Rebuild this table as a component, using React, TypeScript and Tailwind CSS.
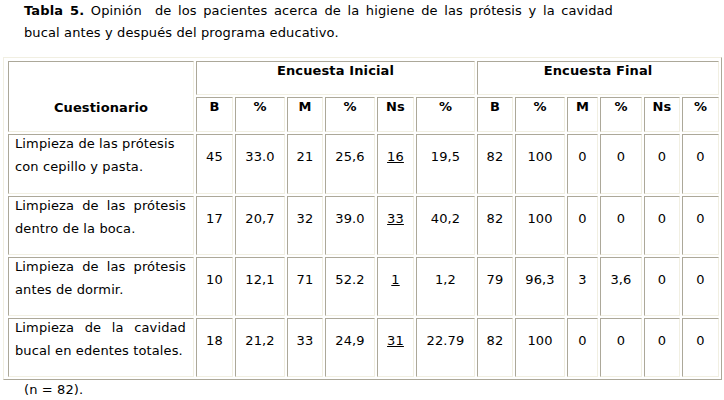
import React from 'react';

const cols = [186, 37, 50, 36, 50, 37, 59, 36, 50, 31, 42, 36, 37];

const subHeads = ['B', '%', 'M', '%', 'Ns', '%', 'B', '%', 'M', '%', 'Ns', '%'];

const rows = [
  {
    q: 'Limpieza de las prótesis con cepillo y pasta.',
    justify: false,
    tall: true,
    vals: ['45', '33.0', '21', '25,6', '16', '19,5', '82', '100', '0', '0', '0', '0'],
  },
  {
    q: 'Limpieza de las prótesis dentro de la boca.',
    justify: true,
    tall: false,
    vals: ['17', '20,7', '32', '39.0', '33', '40,2', '82', '100', '0', '0', '0', '0'],
  },
  {
    q: 'Limpieza de las prótesis antes de dormir.',
    justify: true,
    tall: false,
    vals: ['10', '12,1', '71', '52.2', '1', '1,2', '79', '96,3', '3', '3,6', '0', '0'],
  },
  {
    q: 'Limpieza de la cavidad bucal en edentes totales.',
    justify: true,
    tall: false,
    vals: ['18', '21,2', '33', '24,9', '31', '22.79', '82', '100', '0', '0', '0', '0'],
  },
];

// celda con borde "inset" como las tablas antiguas
const cell =
  'border border-t-[#aca899] border-l-[#aca899] border-r-[#f1efe2] border-b-[#f1efe2] p-0';

export default function App() {
  return (
    <div className="w-[724px] h-[400px] bg-white text-black text-[13px] tracking-[0.12px] font-['DejaVu_Sans',Verdana,sans-serif]">
      {/* Título */}
      <p className="ml-[24px] w-[589px] leading-[22px] text-justify">
        <b>Tabla 5.</b> Opinión{'\u00a0'} de los pacientes acerca de la higiene de las prótesis y la cavidad bucal
        antes y después del programa educativo.
      </p>

      {/* Tabla */}
      <div className="mt-[13px] ml-[3px] w-[719px] border border-t-[#f1efe2] border-l-[#f1efe2] border-r-[#aca899] border-b-[#aca899] pl-[2px] pt-[1px]">
        <table className="table-fixed w-[715px] border-separate border-spacing-[2px]">
          <colgroup>
            {cols.map((w, i) => (
              <col key={i} style={{ width: w }} />
            ))}
          </colgroup>
          <thead>
            <tr>
              <th rowSpan={2} className={`${cell} h-[71px] align-top font-bold`}>
                <div className="pt-[36px] leading-[20px]">Cuestionario</div>
              </th>
              <th colSpan={6} className={`${cell} h-[34px] align-top font-bold`}>
                <div className="leading-[17px]">Encuesta Inicial</div>
              </th>
              <th colSpan={6} className={`${cell} h-[34px] align-top font-bold`}>
                <div className="leading-[17px]">Encuesta Final</div>
              </th>
            </tr>
            <tr>
              {subHeads.map((h, i) => (
                <th key={i} className={`${cell} h-[35px] align-top font-bold`}>
                  <div className="leading-[17px]">{h}</div>
                </th>
              ))}
            </tr>
          </thead>
          <tbody>
            {rows.map((r, ri) => (
              <tr key={ri}>
                <td className={`${cell} ${r.tall ? 'h-[60px]' : 'h-[59px]'} align-top`}>
                  <div
                    className={`-mt-[3px] pl-[6px] pr-[7px] leading-[23px] ${r.justify ? 'text-justify' : 'text-left'}`}
                  >
                    {r.q}
                  </div>
                </td>
                {r.vals.map((v, vi) => (
                  <td key={vi} className={`${cell} align-middle text-center`}>
                    <div className="pb-[15px] leading-[23px]">
                      {vi === 4 ? <span className="underline">{v}</span> : v}
                    </div>
                  </td>
                ))}
              </tr>
            ))}
          </tbody>
        </table>
      </div>

      <p className="mt-[1px] ml-[24px] leading-[18px]">(n = 82).</p>
    </div>
  );
}
